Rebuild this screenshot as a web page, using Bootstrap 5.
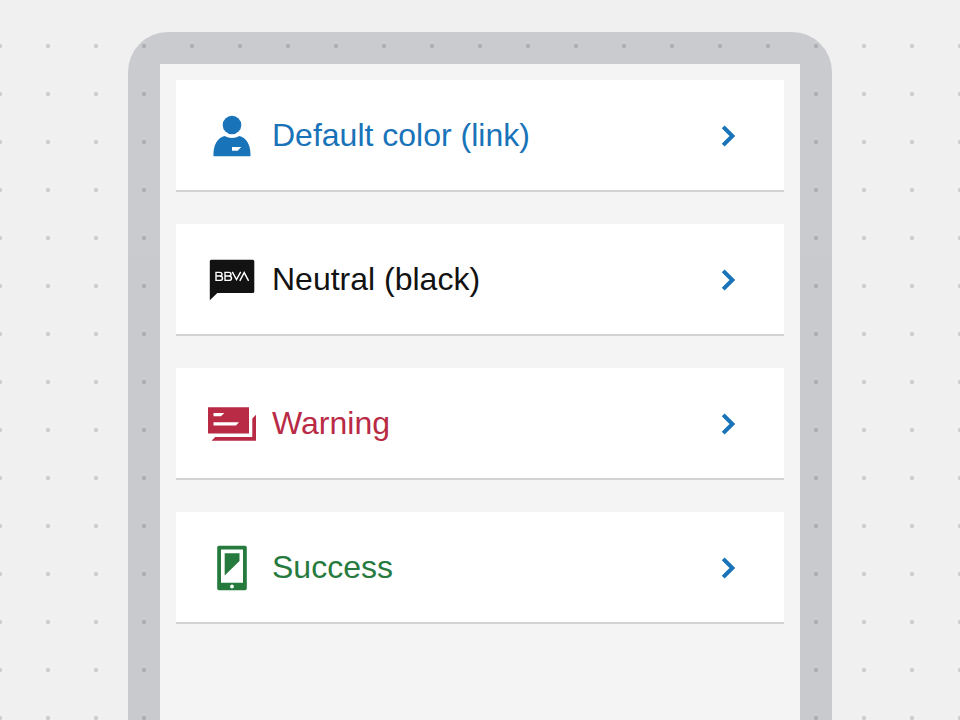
<!DOCTYPE html>
<html lang="en">
<head>
<meta charset="utf-8">
<meta name="viewport" content="width=device-width, initial-scale=1">
<title>Link list</title>
<link href="https://cdn.jsdelivr.net/npm/bootstrap@5.3.0/dist/css/bootstrap.min.css" rel="stylesheet">
<style>
body {
  padding-top: 32px;
  font-family: "Liberation Sans", Arial, sans-serif;
  background: radial-gradient(circle at 24px 24px, #cdcdcd 0 1.8px, transparent 2.5px) -24px 22px / 48px 48px #f0f0f0;
}
.device {
  max-width: 704px;
  min-height: calc(100vh - 32px);
  border: 32px solid rgba(50, 55, 75, .2);
  border-bottom: 0;
  border-radius: 40px 40px 0 0;
}
.screen { background: #f4f4f4; gap: 32px; }
.link-row {
  padding: 32px 32px 30px;
  border-bottom: 2px solid #d3d3d3;
  font-size: 32px;
  line-height: 46px;
  color: #1973b8;
}
.link-row svg { width: 48px; height: 48px; fill: currentColor; }
.link-row .chevron { fill: none; stroke: #1973b8; stroke-width: 4; }
.tone-neutral { color: #121212; }
.tone-warning { color: #b92a45; }
.tone-success { color: #277a3e; }
</style>
</head>
<body>
<main class="device d-flex flex-column mx-auto">
  <nav class="screen flex-grow-1 d-flex flex-column p-3" aria-label="Links">
    <a href="#" class="link-row d-flex align-items-start gap-3 bg-white text-decoration-none">
      <svg class="flex-shrink-0" viewBox="0 0 48 48" aria-hidden="true"><circle cx="24" cy="13" r="9.3"/><path fill-rule="evenodd" d="M16.5 24.1Q24 28 31.5 24.1C39 26 42.9 34 42.5 44.3H5.5C5.1 34 9 26 16.5 24.1ZM24 35V38.7H29.7L33.3 35Z"/></svg>
      <span class="flex-grow-1">Default color (link)</span>
      <svg class="chevron flex-shrink-0" viewBox="0 0 48 48" aria-hidden="true"><path d="M19.2 14.8 28.4 24 19.2 33.2"/></svg>
    </a>
    <a href="#" class="link-row tone-neutral d-flex align-items-start gap-3 bg-white text-decoration-none">
      <svg class="flex-shrink-0" viewBox="0 0 48 48" aria-hidden="true"><path d="M3.3 3.7H44.7Q46.3 3.7 46.3 5.3V35.4Q46.3 37 44.7 37H9.3L1.8 44.3V5.3Q1.8 3.7 3.3 3.7Z"/><path fill="none" stroke="#fff" stroke-width="1.4" d="M8 16.4V24.4H11.8Q14.5 24.4 14.5 22.2 14.5 20 11.8 20H8M11.8 20Q14 20 14 18.2 14 16.4 11.8 16.4H7.3M17 16.4V24.4H20.8Q23.5 24.4 23.5 22.2 23.5 20 20.8 20H17M20.8 20Q23 20 23 18.2 23 16.4 20.8 16.4H16.3M24.3 15.8 28.5 23.6 32.7 15.8M31.8 24.8 36.2 16.6 40.6 24.8"/></svg>
      <span class="flex-grow-1">Neutral (black)</span>
      <svg class="chevron flex-shrink-0" viewBox="0 0 48 48" aria-hidden="true"><path d="M19.2 14.8 28.4 24 19.2 33.2"/></svg>
    </a>
    <a href="#" class="link-row tone-warning d-flex align-items-start gap-3 bg-white text-decoration-none">
      <svg class="flex-shrink-0" viewBox="0 0 48 48" aria-hidden="true"><path fill-rule="evenodd" d="M0 7.2H41V33.5H0ZM5.5 13V16.3H13L16.3 13ZM5.5 22.3V25.4H28L31 22.3Z"/><path d="M48 14.7V40.8H3.6L7.2 37.1H44.3V18.4Z"/></svg>
      <span class="flex-grow-1">Warning</span>
      <svg class="chevron flex-shrink-0" viewBox="0 0 48 48" aria-hidden="true"><path d="M19.2 14.8 28.4 24 19.2 33.2"/></svg>
    </a>
    <a href="#" class="link-row tone-success d-flex align-items-start gap-3 bg-white text-decoration-none">
      <svg class="flex-shrink-0" viewBox="0 0 48 48" aria-hidden="true"><path fill-rule="evenodd" d="M11 1.7H37Q38.8 1.7 38.8 3.5V44.5Q38.8 46.3 37 46.3H11Q9.2 46.3 9.2 44.5V3.5Q9.2 1.7 11 1.7ZM13 5.5V38.7H35V5.5ZM24 40.6A1.9 1.9 0 1 0 24 44.4 1.9 1.9 0 1 0 24 40.6Z"/><path d="M16.7 9.2H31.5V17L16.7 31.5Z"/></svg>
      <span class="flex-grow-1">Success</span>
      <svg class="chevron flex-shrink-0" viewBox="0 0 48 48" aria-hidden="true"><path d="M19.2 14.8 28.4 24 19.2 33.2"/></svg>
    </a>
  </nav>
</main>
<script src="https://cdn.jsdelivr.net/npm/bootstrap@5.3.0/dist/js/bootstrap.bundle.min.js"></script>
</body>
</html>
